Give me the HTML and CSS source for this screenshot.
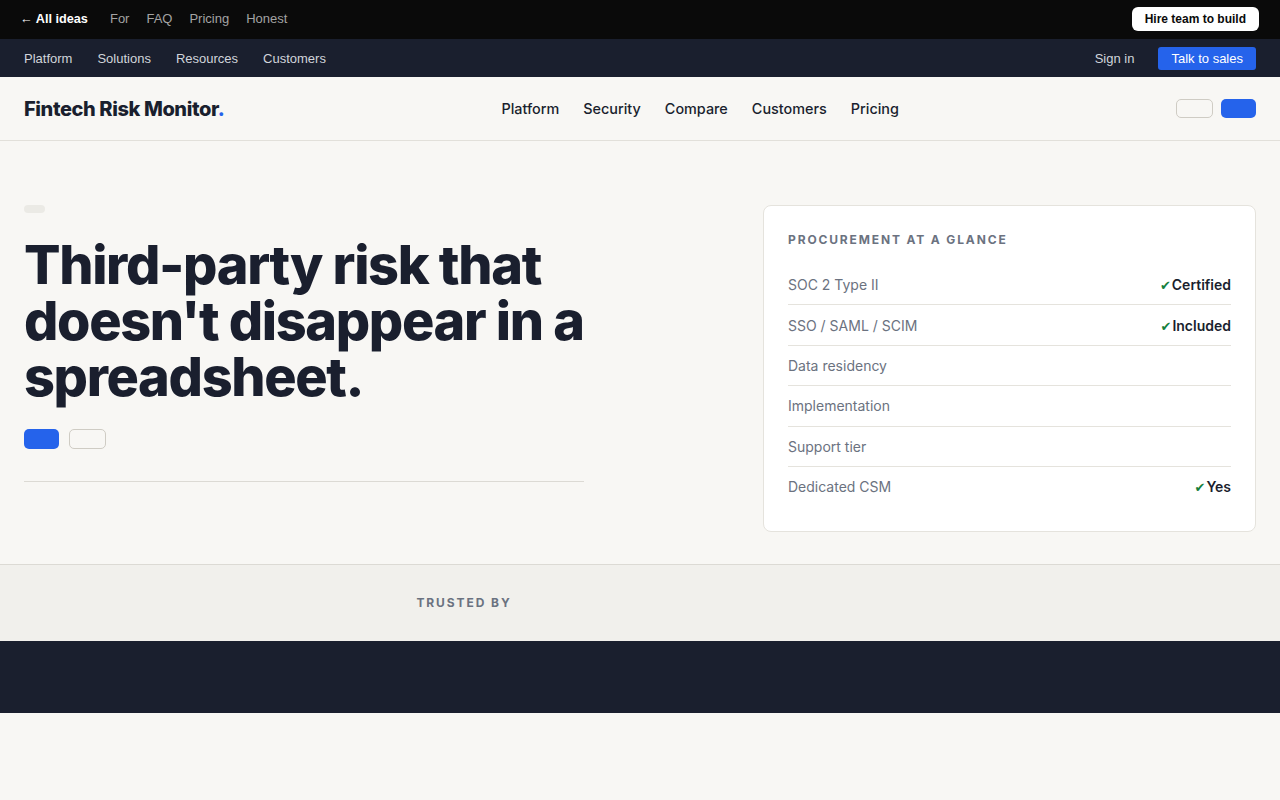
FILE: index.html
```html
<!DOCTYPE html>
<html lang="en">
<head>
  <meta charset="UTF-8">
  <meta name="viewport" content="width=device-width, initial-scale=1.0">
  <title>Fintech Risk Monitor</title>
  <link rel="stylesheet" href="styles.css">
</head>
<body>

  <div class="topbar">
    <div class="topbar-links">
      <a class="back" href="#">&larr; All ideas</a>
      <a href="#">For</a>
      <a href="#">FAQ</a>
      <a href="#">Pricing</a>
      <a href="#">Honest</a>
    </div>
    <a class="hire-btn" href="#">Hire team to build</a>
  </div>

  <div class="subnav">
    <div class="subnav-links">
      <a href="#">Platform</a>
      <a href="#">Solutions</a>
      <a href="#">Resources</a>
      <a href="#">Customers</a>
    </div>
    <div class="subnav-actions">
      <a href="#">Sign in</a>
      <a class="sales-btn" href="#">Talk to sales</a>
    </div>
  </div>

  <header class="site-header">
    <div class="logo">Fintech Risk Monitor<span class="dot">.</span></div>
    <nav class="main-nav">
      <a href="#">Platform</a>
      <a href="#">Security</a>
      <a href="#">Compare</a>
      <a href="#">Customers</a>
      <a href="#">Pricing</a>
    </nav>
    <div class="header-actions">
      <button class="btn btn-ghost btn-sm"></button>
      <button class="btn btn-primary btn-sm"></button>
    </div>
  </header>

  <section class="hero">
    <div class="hero-copy">
      <div class="eyebrow"></div>
      <h1>Third-party risk that doesn't disappear in a spreadsheet.</h1>
      <div class="hero-actions">
        <button class="btn btn-primary"></button>
        <button class="btn btn-ghost"></button>
      </div>
      <hr class="hero-rule">
    </div>

    <div class="glance-card">
      <h2>Procurement at a glance</h2>
      <ul class="glance-list">
        <li><span>SOC 2 Type II</span><strong><i>✔</i>Certified</strong></li>
        <li><span>SSO / SAML / SCIM</span><strong><i>✔</i>Included</strong></li>
        <li><span>Data residency</span></li>
        <li><span>Implementation</span></li>
        <li><span>Support tier</span></li>
        <li><span>Dedicated CSM</span><strong><i>✔</i>Yes</strong></li>
      </ul>
    </div>
  </section>

  <section class="trusted">
    <div class="trusted-label">Trusted by</div>
  </section>

  <footer class="site-footer"></footer>

</body>
</html>
```

FILE: styles.css
```css
body {
  margin: 0;
  background-color: #f8f7f4;
  font-family: Inter, "Liberation Sans", sans-serif;
  color: #1a1f2e;
}

a {
  text-decoration: none;
  color: inherit;
}

.topbar {
  display: flex;
  justify-content: space-between;
  align-items: center;
  box-sizing: border-box;
  height: 39px;
  padding: 0 21px 2px 20px;
  background-color: #0a0a0a;
  font-family: "Liberation Sans", Arial, sans-serif;
  font-size: 13px;
}

.topbar-links {
  display: flex;
  gap: 17px;
  align-items: center;
}

.topbar-links a {
  color: #a3a3a3;
}

.topbar-links .back {
  color: #fff;
  font-weight: bold;
  font-size: 12.7px;
  margin-right: 5px;
}

.hire-btn {
  background-color: #fff;
  color: #0a0a0a;
  font-size: 12px;
  font-weight: bold;
  padding: 5px 13px;
  border-radius: 6px;
}

.subnav {
  display: flex;
  justify-content: space-between;
  align-items: center;
  height: 38px;
  padding: 0 24px;
  background-color: #1a1f2e;
  font-family: "Liberation Sans", Arial, sans-serif;
  font-size: 13px;
}

.subnav-links, .subnav-actions {
  display: flex;
  align-items: center;
  gap: 25px;
}

.subnav-actions {
  gap: 24px;
}

.subnav a {
  color: #d1d5db;
}

.subnav .sales-btn {
  background-color: #2563eb;
  color: #fff;
  padding: 4px 13px;
  border-radius: 3px;
}

.site-header {
  display: flex;
  justify-content: space-between;
  align-items: center;
  height: 63px;
  padding: 0 24px;
  border-bottom: 1px solid #e2e0da;
}

.logo {
  font-size: 20px;
  font-weight: 800;
  letter-spacing: -0.02em;
  white-space: nowrap;
}

.logo .dot {
  color: #2563eb;
}

.main-nav {
  display: flex;
  gap: 24px;
  font-size: 14.4px;
  font-weight: 500;
}

.header-actions {
  display: flex;
  gap: 8px;
}

.btn {
  display: block;
  padding: 0;
  border-radius: 5px;
  height: 20px;
  cursor: pointer;
}

.btn-primary {
  width: 35px;
  background-color: #2563eb;
  border: none;
}

.btn-ghost {
  width: 37px;
  background-color: transparent;
  border: 1px solid #cfccc4;
}

.btn-sm {
  height: 19px;
  width: 35px;
}

.btn-ghost.btn-sm {
  width: 37px;
}

.hero {
  display: grid;
  grid-template-columns: 1fr 493px;
  gap: 47px;
  align-items: start;
  padding: 64px 24px 32px;
}

.eyebrow {
  width: 21px;
  height: 8px;
  border-radius: 4px;
  background-color: #ebeae5;
}

.hero h1 {
  max-width: 570px;
  margin: 24px 0 24px;
  font-size: 54px;
  line-height: 56px;
  font-weight: 800;
  letter-spacing: -0.025em;
}

.hero-actions {
  display: flex;
  gap: 10px;
}

.hero-rule {
  width: 560px;
  margin: 32px 0 0;
  border: none;
  border-top: 1px solid #dcdad4;
}

.glance-card {
  background-color: #fff;
  border: 1px solid #e5e3dd;
  border-radius: 8px;
  padding: 26px 24px 25px;
}

.glance-card h2 {
  margin: 0 0 18px;
  font-size: 12px;
  font-weight: 700;
  letter-spacing: 0.155em;
  text-transform: uppercase;
  color: #6b7280;
}

.glance-list {
  list-style: none;
  margin: 0;
  padding: 0;
}

.glance-list li {
  display: flex;
  justify-content: space-between;
  align-items: center;
  height: 39.4px;
  font-size: 14px;
  color: #6b7280;
  border-bottom: 1px solid #e5e3dd;
}

.glance-list li:last-child {
  border-bottom: none;
}

.glance-list strong {
  color: #1a1f2e;
  font-weight: 600;
}

.glance-list i {
  font-family: "DejaVu Sans", sans-serif;
  font-style: normal;
  color: #15803d;
  font-size: 13px;
  margin-right: 1px;
}

.trusted {
  background-color: #f1f0ec;
  border-top: 1px solid #dcdad4;
  padding: 30px 24px 31px;
}

.trusted-label {
  width: 880px;
  text-align: center;
  font-size: 12px;
  line-height: 15px;
  font-weight: 700;
  letter-spacing: 0.16em;
  text-transform: uppercase;
  color: #6b7280;
}

.site-footer {
  height: 72px;
  background-color: #1a1f2e;
}
```
